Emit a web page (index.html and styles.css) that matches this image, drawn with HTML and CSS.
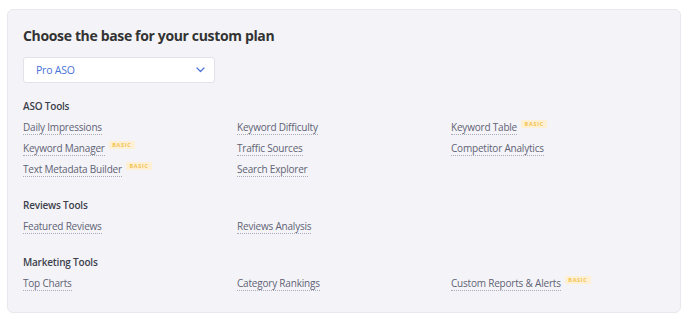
FILE: index.html
```html
<!DOCTYPE html>
<html lang="en">

<head>
    <meta charset="UTF-8">
    <meta name="viewport" content="width=device-width, initial-scale=1.0">
    <title>Custom plan</title>
    <link rel="stylesheet" href="styles.css">
</head>

<body>
    <div class="plan-card">
        <h2>Choose the base for your custom plan</h2>

        <div class="plan-select">
            <span>Pro ASO</span>
            <svg width="9" height="6" viewBox="0 0 9 6">
                <path d="M1 1 L4.5 4.5 L8 1" fill="none" stroke="#4a72d6" stroke-width="1.2" stroke-linecap="round" stroke-linejoin="round"/>
            </svg>
        </div>

        <div class="group">
            <h3>ASO Tools</h3>
            <div class="tools">
                <div class="tool"><a>Daily Impressions</a></div>
                <div class="tool"><a>Keyword Difficulty</a></div>
                <div class="tool"><a>Keyword Table</a><span class="badge">BASIC</span></div>
                <div class="tool"><a>Keyword Manager</a><span class="badge">BASIC</span></div>
                <div class="tool"><a>Traffic Sources</a></div>
                <div class="tool"><a>Competitor Analytics</a></div>
                <div class="tool"><a>Text Metadata Builder</a><span class="badge">BASIC</span></div>
                <div class="tool"><a>Search Explorer</a></div>
            </div>
        </div>

        <div class="group">
            <h3>Reviews Tools</h3>
            <div class="tools">
                <div class="tool"><a>Featured Reviews</a></div>
                <div class="tool"><a>Reviews Analysis</a></div>
            </div>
        </div>

        <div class="group">
            <h3>Marketing Tools</h3>
            <div class="tools">
                <div class="tool"><a>Top Charts</a></div>
                <div class="tool"><a>Category Rankings</a></div>
                <div class="tool"><a>Custom Reports &amp; Alerts</a><span class="badge">BASIC</span></div>
            </div>
        </div>
    </div>
</body>

</html>
```

FILE: styles.css
```css
body {
    font-family: "Open Sans", Arial, sans-serif;
    background-color: #fff;
    margin: 0;
    padding: 9px 7px 0 7px;
}

.plan-card {
    background-color: #f4f4f8;
    border: 1px solid #e8e8ee;
    border-radius: 6px;
    padding: 16px 15px 15px 15px;
}

h2 {
    margin: 0;
    font-size: 14px;
    font-weight: 700;
    letter-spacing: -0.35px;
    color: #333;
    line-height: 20px;
}

.plan-select {
    display: flex;
    align-items: center;
    justify-content: space-between;
    width: 192px;
    height: 26px;
    margin-top: 11px;
    padding: 0 9px 0 12px;
    box-sizing: border-box;
    background-color: #fff;
    border: 1px solid #e2e2ea;
    border-radius: 3px;
    font-size: 10.5px;
    letter-spacing: -0.2px;
    color: #4a72d6;
}

.group {
    margin-top: 16px;
}

.group + .group {
    margin-top: 15px;
}

h3 {
    margin: 0;
    font-size: 10px;
    font-weight: 600;
    letter-spacing: -0.2px;
    color: #3d3f4c;
    line-height: 14px;
}

.tools {
    display: grid;
    grid-template-columns: repeat(3, 214px);
    grid-auto-rows: 21px;
    margin-top: 7px;
}

.tool {
    display: flex;
    align-items: flex-start;
    font-size: 10px;
    letter-spacing: -0.2px;
    line-height: 14px;
}

.tool a {
    color: #5f6274;
    border-bottom: 1px dotted #a9abba;
}

.badge {
    margin-left: 4px;
    padding: 0 3.5px;
    background-color: #fdf0d5;
    color: #f4c24f;
    font-size: 5.5px;
    font-weight: 700;
    letter-spacing: 0.7px;
    line-height: 8px;
    height: 8px;
}
```
